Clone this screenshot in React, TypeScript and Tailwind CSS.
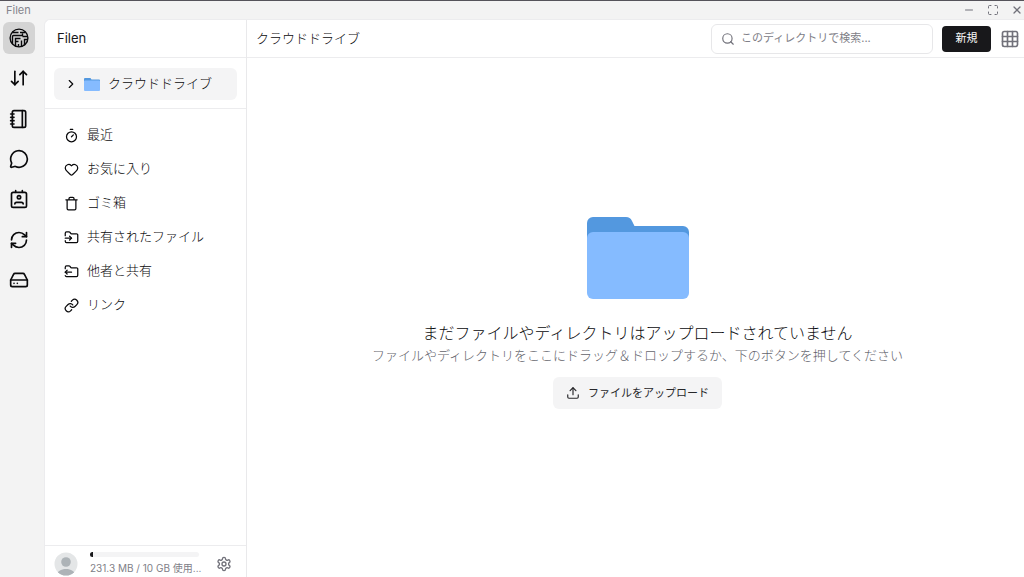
import React from "react";
import {
  ArrowDownUp, ChevronRight, FolderInput, FolderOutput, Grid3x3, HardDrive, Heart, Link,
  Maximize, MessageCircle, Minus, Notebook, RefreshCw, Search, Timer, Upload, X,
} from "lucide-react";

type IconProps = { className?: string; strokeWidth?: number };

function FilenLogo({ className }: IconProps) {
  return (
    <svg viewBox="0 0 20 20" className={className} fill="none" stroke="currentColor" strokeWidth="1.4">
      <circle cx="10" cy="10" r="8.9" />
      <path d="M3.500 4.500H9.500M11 4.500H16M3.500 16V8.500Q3.500 7.500 4.500 7.500H13.500V5.500M6.500 18.400V10.500H11.500M6.500 13.500H9.500M12.500 18.600V12.500M15.500 17.400V11.500H18.800M13.500 8.500H18.400M9.500 18.600V16" />
    </svg>
  );
}

function Contact({ className, strokeWidth = 2 }: IconProps) {
  return (
    <svg viewBox="0 0 24 24" className={className} fill="none" stroke="currentColor" strokeWidth={strokeWidth} strokeLinecap="round" strokeLinejoin="round">
      <path d="M17 18a2 2 0 0 0-2-2H9a2 2 0 0 0-2 2M8 2v2M16 2v2" />
      <rect width="18" height="18" x="3" y="4" rx="2" />
      <circle cx="12" cy="10" r="2" />
    </svg>
  );
}

function Trash({ className, strokeWidth = 2 }: IconProps) {
  return (
    <svg viewBox="0 0 24 24" className={className} fill="none" stroke="currentColor" strokeWidth={strokeWidth} strokeLinecap="round" strokeLinejoin="round">
      <path d="M3 6h18M19 6v14c0 1-1 2-2 2H7c-1 0-2-1-2-2V6M8 6V4c0-1 1-2 2-2h4c1 0 2 1 2 2v2" />
    </svg>
  );
}

function Gear({ className, strokeWidth = 2 }: IconProps) {
  return (
    <svg viewBox="0 0 24 24" className={className} fill="none" stroke="currentColor" strokeWidth={strokeWidth} strokeLinecap="round" strokeLinejoin="round">
      <path d="M12.22 2h-.44a2 2 0 0 0-2 2v.18a2 2 0 0 1-1 1.73l-.43.25a2 2 0 0 1-2 0l-.15-.08a2 2 0 0 0-2.73.73l-.22.38a2 2 0 0 0 .73 2.73l.15.1a2 2 0 0 1 1 1.72v.51a2 2 0 0 1-1 1.74l-.15.09a2 2 0 0 0-.73 2.73l.22.38a2 2 0 0 0 2.73.73l.15-.08a2 2 0 0 1 2 0l.43.25a2 2 0 0 1 1 1.73V20a2 2 0 0 0 2 2h.44a2 2 0 0 0 2-2v-.18a2 2 0 0 1 1-1.73l.43-.25a2 2 0 0 1 2 0l.15.08a2 2 0 0 0 2.73-.73l.22-.39a2 2 0 0 0-.73-2.73l-.15-.08a2 2 0 0 1-1-1.74v-.5a2 2 0 0 1 1-1.74l.15-.09a2 2 0 0 0 .73-2.73l-.22-.38a2 2 0 0 0-2.73-.73l-.15.08a2 2 0 0 1-2 0l-.43-.25a2 2 0 0 1-1-1.73V4a2 2 0 0 0-2-2z" />
      <circle cx="12" cy="12" r="3" />
    </svg>
  );
}

function Folder({ className }: IconProps) {
  return (
    <svg viewBox="0 0 102 82" className={className}>
      <path fill="#5398df" d="M0 6a6 6 0 0 1 6-6h33c3 0 4.500 1 6 4l2.500 5h48.500a6 6 0 0 1 6 6v8H0z" />
      <rect fill="#85bbff" y="15" width="102" height="67" rx="6" />
    </svg>
  );
}

const rail = [
  { label: "クラウドドライブ", Icon: FilenLogo, active: true },
  { label: "転送", Icon: ArrowDownUp },
  { label: "ノート", Icon: Notebook },
  { label: "チャット", Icon: MessageCircle },
  { label: "連絡先", Icon: Contact },
  { label: "同期", Icon: RefreshCw },
  { label: "マウント", Icon: HardDrive },
];

const places = [
  { label: "最近", Icon: Timer },
  { label: "お気に入り", Icon: Heart },
  { label: "ゴミ箱", Icon: Trash },
  { label: "共有されたファイル", Icon: FolderInput },
  { label: "他者と共有", Icon: FolderOutput },
  { label: "リンク", Icon: Link },
];

export default function App() {
  return (
    <div className="flex h-screen flex-col overflow-hidden border-t border-[#55535a] bg-[#f3f3f3] font-[Inter,'Noto_Sans_CJK_JP',sans-serif] text-[13px] font-light text-[#09090b]">
      <header className="flex h-[18px] shrink-0 items-center justify-between pl-1.5 pr-px text-[11px] font-normal text-[#85858c]">
        <span>Filen</span>
        <div className="flex items-center gap-3 text-[#71717a]">
          <button aria-label="最小化"><Minus className="size-3" /></button>
          <button aria-label="最大化"><Maximize className="size-3" /></button>
          <button aria-label="閉じる"><X className="size-3" strokeWidth={2.5} /></button>
        </div>
      </header>
      <div className="flex min-h-0 flex-1">
        <nav className="w-11 shrink-0 pl-[3px] pt-[3px]">
          <div className="flex h-[274px] flex-col justify-between">
            {rail.map(({ label, Icon, active }) => (
              <button key={label} aria-label={label} className={active ? "flex size-8 items-center justify-center rounded-md bg-[#d4d4d4]" : "flex size-8 items-center justify-center rounded-md"}>
                <Icon className="size-5" />
              </button>
            ))}
          </div>
        </nav>
        <div className="flex min-w-0 flex-1 overflow-hidden rounded-tl-md border-l border-t border-[#ececee] bg-white">
          <aside className="flex w-[202px] shrink-0 flex-col border-r border-[#e9e9eb]">
            <div className="flex h-[38px] shrink-0 items-center border-b border-[#ececee] px-3 pt-px font-normal text-[#18181b]">Filen</div>
            <div className="border-b border-[#ececee] px-[9px] pb-2 pt-[10px]">
              <button className="flex h-8 w-full items-center rounded-md bg-[#f4f4f5] pl-2.5">
                <ChevronRight className="size-3.5" />
                <Folder className="ml-1.5 h-[13px] w-4" />
                <span className="ml-2">クラウドドライブ</span>
              </button>
            </div>
            <ul className="flex flex-1 flex-col gap-0.5 px-[9px] pt-[10px]">
              {places.map(({ label, Icon }) => (
                <li key={label}>
                  <button className="flex h-8 w-full items-center gap-2 pl-2.5">
                    <Icon className="size-[15px]" strokeWidth={2} />
                    <span>{label}</span>
                  </button>
                </li>
              ))}
            </ul>
            <div className="flex h-8 shrink-0 items-center border-t border-[#ececee] pl-[9px] pr-3.5 pt-1">
              <svg viewBox="0 0 24 24" className="size-6 shrink-0">
                <clipPath id="avatar"><circle cx="12" cy="12" r="11.500" /></clipPath>
                <g clipPath="url(#avatar)">
                  <rect width="24" height="24" fill="#e4e6e7" />
                  <circle cx="12" cy="10" r="4.800" fill="#adb3b7" />
                  <path d="M3 24c0-5 4-7 9-7s9 2 9 7z" fill="#adb3b7" />
                </g>
              </svg>
              <div className="ml-3 flex w-[112px] flex-col">
                <div className="mr-[3px] h-[5px] overflow-hidden rounded-full bg-[#f4f4f5]"><div className="h-full w-[3px] bg-[#18181b]" /></div>
                <span className="mt-[3px] whitespace-nowrap text-[10px] leading-4 font-normal text-[#808087]">231.3 MB / 10 GB 使用...</span>
              </div>
              <button aria-label="設定" className="ml-auto text-[#71717a]"><Gear className="size-4" /></button>
            </div>
          </aside>
          <main className="flex min-w-0 flex-1 flex-col">
            <div className="flex h-[38px] shrink-0 items-center border-b border-[#ececee] pl-[9px] pr-1">
              <h1 className="flex-1">クラウドドライブ</h1>
              <label className="flex h-[30px] w-[222px] items-center gap-1.5 rounded-md border border-[#e7e7e9] px-[9px] text-[#71717a]">
                <Search className="size-3.5 shrink-0" />
                <input type="search" aria-label="検索" placeholder="このディレクトリで検索..." className="min-w-0 flex-1 text-[11px] font-normal outline-none placeholder:text-[#808087]" />
              </label>
              <button className="ml-[9px] h-[26px] w-[49px] rounded bg-[#18181b] text-[11px] font-normal text-[#fafafa]">新規</button>
              <button aria-label="グリッド表示" className="ml-[9px] text-[#71717a]"><Grid3x3 className="size-5" /></button>
            </div>
            <div className="flex flex-1 flex-col items-center justify-center pb-[9px] pl-1">
              <Folder className="h-[82px] w-[102px]" />
              <h2 className="mt-[22px] text-[16px] leading-6">まだファイルやディレクトリはアップロードされていません</h2>
              <p className="leading-5 text-[#63636b]">ファイルやディレクトリをここにドラッグ＆ドロップするか、下のボタンを押してください</p>
              <button className="mt-3 flex h-8 items-center gap-2 rounded-md bg-[#f4f4f5] px-[13px] text-[11px] font-normal text-[#27272a]">
                <Upload className="size-3.5" />
                ファイルをアップロード
              </button>
            </div>
          </main>
        </div>
      </div>
    </div>
  );
}
